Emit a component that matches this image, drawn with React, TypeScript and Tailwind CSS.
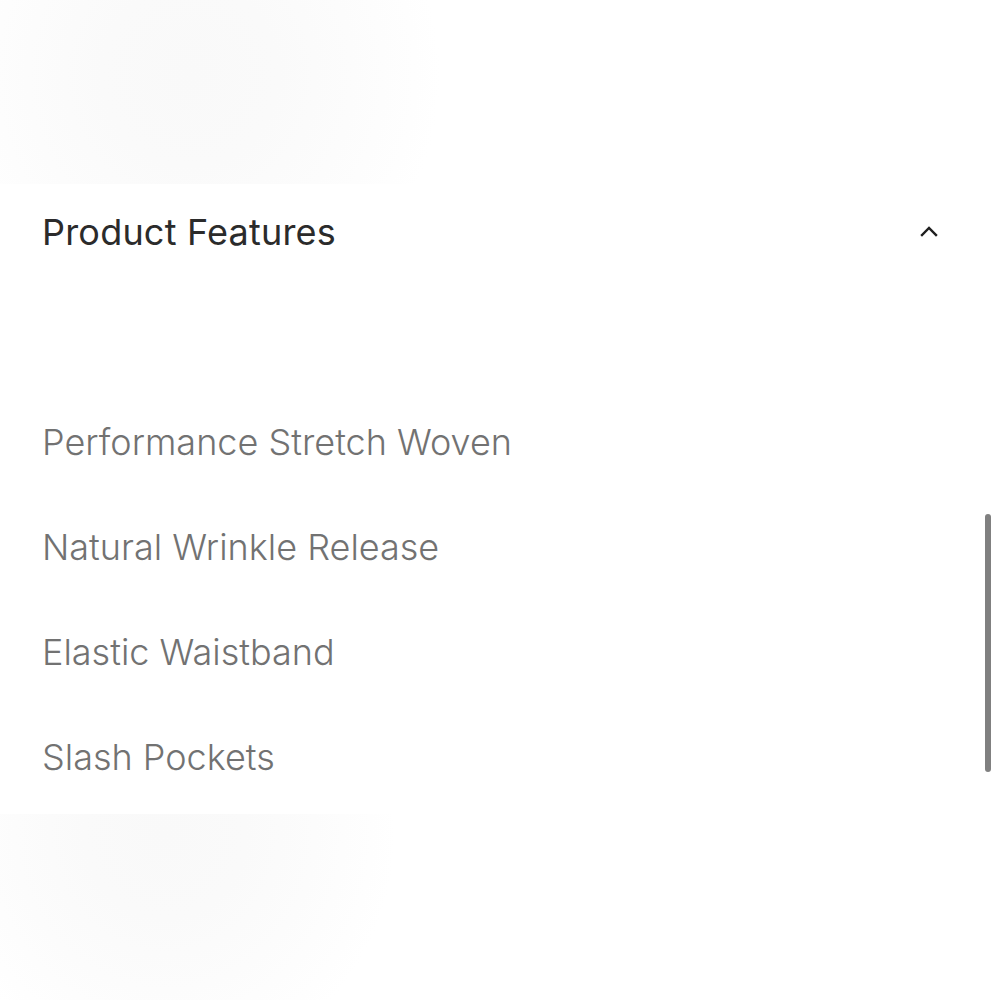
import React, { useState } from 'react';

const FEATURES = [
    'Performance Stretch Woven',
    'Natural Wrinkle Release',
    'Elastic Waistband',
    'Slash Pockets',
];

const ChevronUp = ({ className }: { className?: string }) => (
    <svg viewBox="0 0 18 12" fill="none" stroke="currentColor" strokeWidth="2.4" strokeLinecap="square" strokeLinejoin="miter" className={className}>
        <path d="M2 10 L9 3 L16 10" />
    </svg>
);

export default function App() {
    const [open, setOpen] = useState(true);

    return (
        <div className="relative w-[1000px] h-[1000px] overflow-hidden bg-white" style={{ fontFamily: 'Inter, "Noto Sans", sans-serif' }}>
            {/* faint product image bleeding in above */}
            <div className="h-[184px] bg-[radial-gradient(ellipse_250px_260px_at_190px_75px,#f9f9f9_0%,#fafafa_35%,#fcfcfc_65%,#fefefe_90%,#ffffff_100%)]" />

            <section className="relative bg-white px-[42px] pt-[26px] pb-[35px]">
                <button
                    onClick={() => setOpen(!open)}
                    className="w-full flex items-center justify-between text-left"
                >
                    <h2 className="text-[36px] leading-[44px] font-normal text-[#2b2b2b] tracking-[0.2px]">Product Features</h2>
                    <ChevronUp className="w-[18px] h-[12px] mr-[20px] mb-[2px] text-[#1f1f1f]" />
                </button>

                {open && (
                    <ul className="mt-[166px] flex flex-col gap-[61px]">
                        {FEATURES.map(f => (
                            <li key={f} className="text-[36px] leading-[44px] font-light text-[#727272] tracking-[0px]">{f}</li>
                        ))}
                    </ul>
                )}

                <div className="absolute right-[9px] top-[330px] w-[6px] h-[258px] rounded-full bg-[#808080]" />
            </section>

            {/* faint images below */}
            <div className="h-[186px] bg-[radial-gradient(ellipse_230px_240px_at_165px_20px,#f9f9f9_0%,#fafafa_35%,#fcfcfc_65%,#fefefe_90%,#ffffff_100%),radial-gradient(ellipse_200px_230px_at_1010px_30px,#fafafa_0%,#fbfbfb_40%,#fdfdfd_75%,#ffffff_100%)]" />
        </div>
    );
}
